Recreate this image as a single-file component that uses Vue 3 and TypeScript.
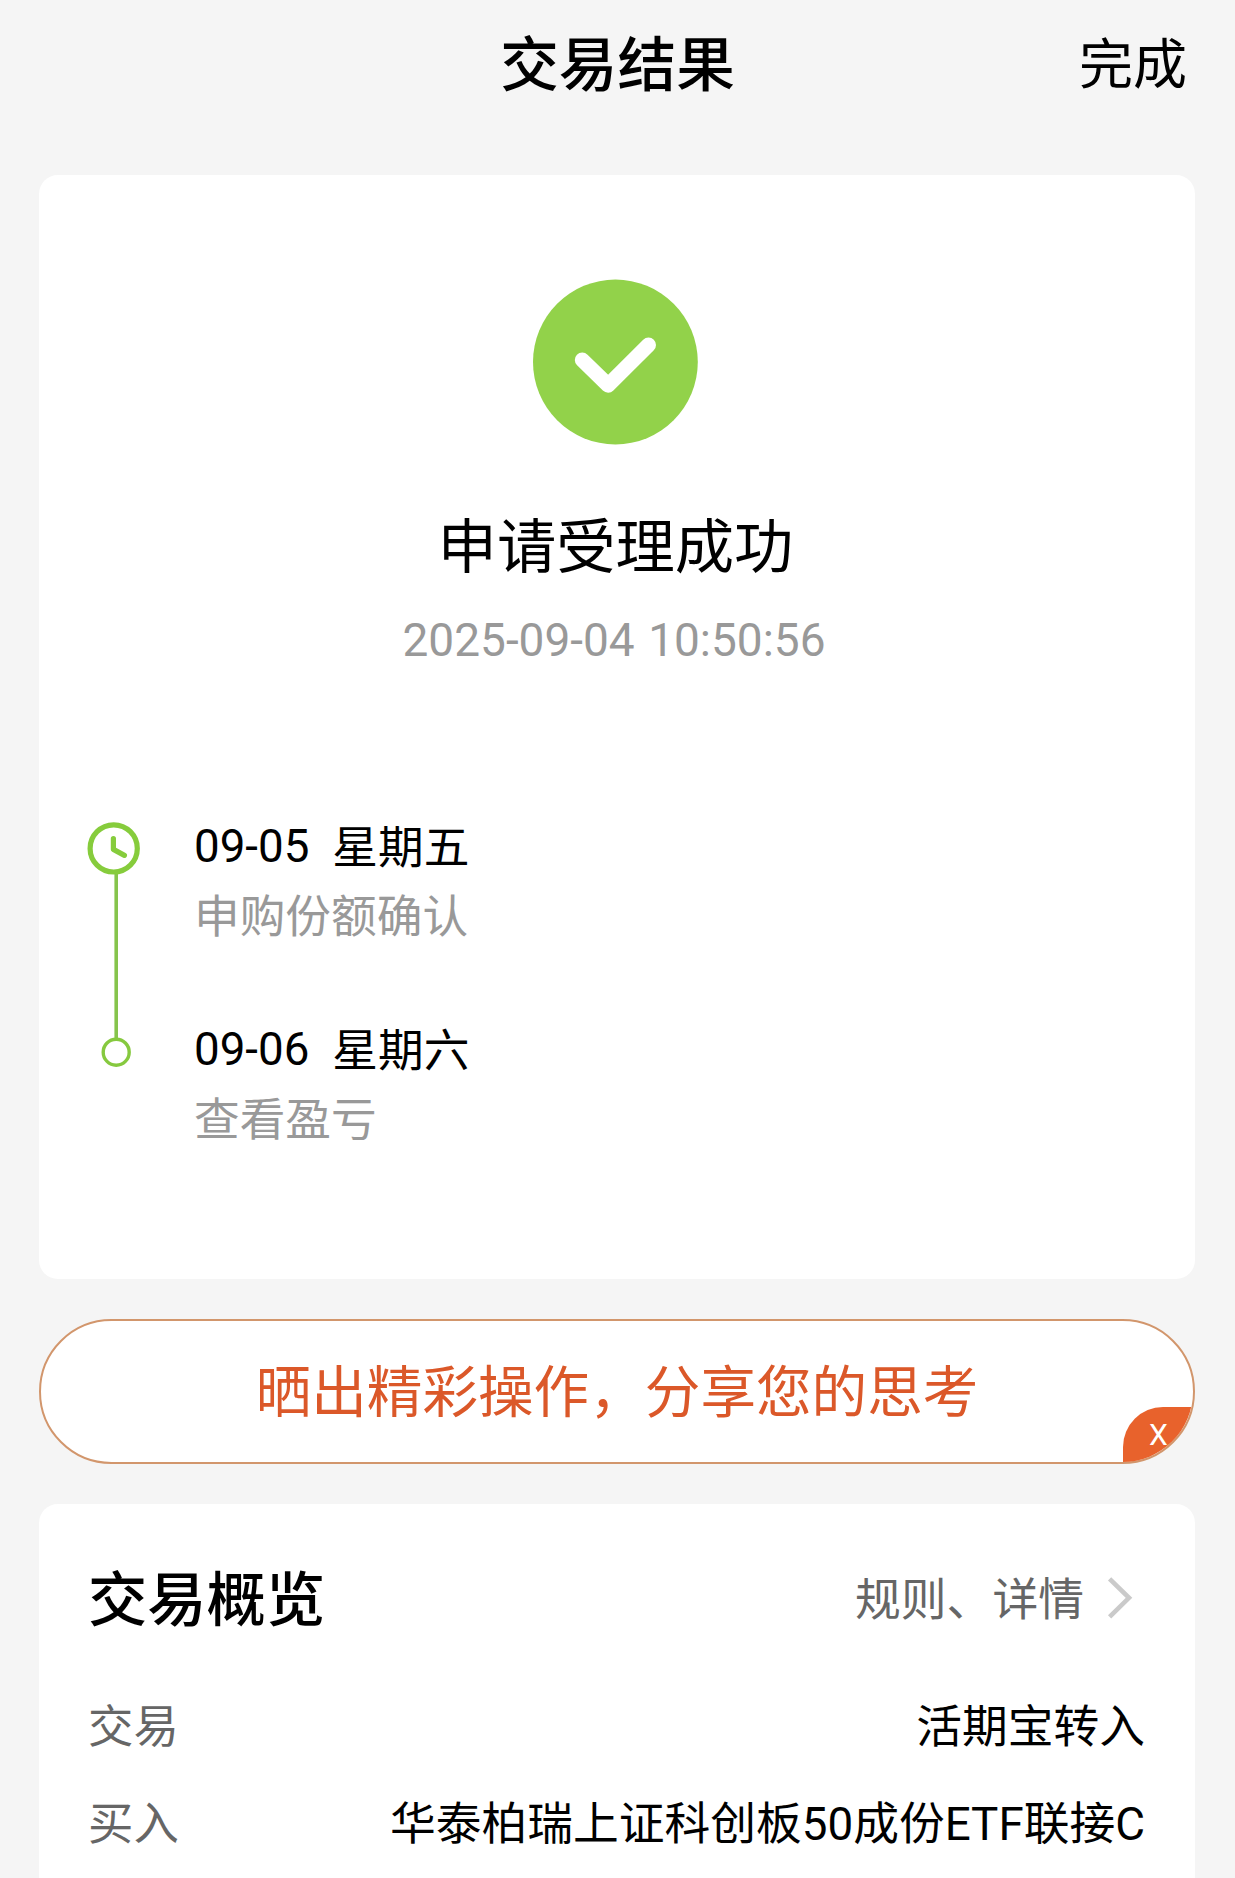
<script setup lang="ts">
interface Step {
  date: string
  weekday: string
  label: string
}

interface OverviewRow {
  label: string
  value: string
}

const steps: Step[] = [
  { date: '09-05', weekday: '星期五', label: '申购份额确认' },
  { date: '09-06', weekday: '星期六', label: '查看盈亏' },
]

const rows: OverviewRow[] = [
  { label: '交易', value: '活期宝转入' },
  { label: '买入', value: '华泰柏瑞上证科创板50成份ETF联接C' },
]
</script>

<template>
  <div class="page">
    <header class="header">
      <h1 class="title">交易结果</h1>
      <a class="done">完成</a>
    </header>

    <section class="card result">
      <svg class="success" viewBox="0 0 166 166" width="166" height="166">
        <circle cx="83.4" cy="83" r="82.4" fill="#92d24a" />
        <path d="M50.3 81 L76.1 106.2 L116.5 66" fill="none" stroke="#fff" stroke-width="15" stroke-linecap="round" stroke-linejoin="round" />
      </svg>
      <h2 class="status">申请受理成功</h2>
      <p class="time">2025-09-04 10:50:56</p>

      <div class="timeline">
        <svg class="track" viewBox="0 0 60 260" width="60" height="260">
          <path d="M31.2 57 V221" stroke="#86c44c" stroke-width="3.6" />
          <circle cx="28.7" cy="31.4" r="23.6" fill="none" stroke="#86cc3c" stroke-width="5.2" />
          <path d="M28.4 21.6 V32.4 L39.4 38.4" fill="none" stroke="#86cc3c" stroke-width="5.2" stroke-linecap="round" stroke-linejoin="round" />
          <circle cx="31.2" cy="235.2" r="13" fill="#fff" stroke="#86c93f" stroke-width="3.4" />
        </svg>
        <ul class="steps">
          <li v-for="step in steps" :key="step.date" class="step">
            <div class="when">
              <span>{{ step.date }}</span>
              <span class="weekday">{{ step.weekday }}</span>
            </div>
            <div class="what">{{ step.label }}</div>
          </li>
        </ul>
      </div>
    </section>

    <section class="share">
      <span class="share-text">晒出精彩操作，分享您的思考</span>
      <span class="close">X</span>
    </section>

    <section class="card overview">
      <div class="overview-head">
        <h2 class="overview-title">交易概览</h2>
        <a class="more">
          <span class="more-text">规则、详情</span>
          <svg class="chevron" viewBox="0 0 26 44" width="26" height="44">
            <path d="M2.6 1.8 L22 20.8 L2.6 39.8" fill="none" stroke="#cacaca" stroke-width="4.6" />
          </svg>
        </a>
      </div>
      <div v-for="row in rows" :key="row.label" class="row">
        <span class="row-label">{{ row.label }}</span>
        <span class="row-value">{{ row.value }}</span>
      </div>
    </section>
  </div>
</template>

<style>
body {
  margin: 0;
  background: #f5f5f5;
}
</style>

<style scoped>
.page {
  box-sizing: border-box;
  width: 1235px;
  height: 1878px;
  padding: 0 40px 0 39px;
  overflow: hidden;
  background: #f5f5f5;
  color: #000;
  font-family: Roboto, "Noto Sans CJK SC", sans-serif;
}

h1,
h2,
p,
ul {
  margin: 0;
  padding: 0;
  font-weight: 400;
  list-style: none;
}

.header {
  box-sizing: border-box;
  display: grid;
  grid-template-columns: 1fr auto 1fr;
  align-items: center;
  height: 131px;
  padding-top: 1px;
  margin-bottom: 44px;
}

.title {
  grid-column: 2;
  padding-left: 1px;
  font-size: 58.7px;
  font-weight: 500;
  line-height: 80px;
}

.done {
  justify-self: end;
  margin-right: 8px;
  font-size: 54px;
  line-height: 80px;
}

.card {
  box-sizing: border-box;
  background: #fff;
  border-radius: 19px;
}

.result {
  display: flex;
  flex-direction: column;
  align-items: center;
  height: 1104px;
  padding-top: 104px;
}

.success {
  display: block;
  margin-right: 4px;
}

.status {
  margin: 63px 3px 0 0;
  font-size: 59.3px;
  line-height: 80px;
}

.time {
  margin: 22px 6px 0 0;
  color: #999;
  font-size: 46px;
  line-height: 60px;
  word-spacing: 2px;
}

.timeline {
  display: flex;
  align-self: stretch;
  gap: 49px;
  margin-top: 147px;
  padding-left: 46px;
}

.track {
  flex: none;
}

.step {
  height: 203px;
}

.when,
.what {
  font-size: 45.7px;
  line-height: 60px;
}

.when {
  display: flex;
  gap: 23px;
  height: 60px;
}

.weekday {
  padding-top: 2px;
}

.what {
  margin-top: 11px;
  color: #999;
}

.share {
  position: relative;
  box-sizing: border-box;
  display: flex;
  align-items: center;
  justify-content: center;
  height: 145px;
  margin: 40px 0;
  border: 2px solid #d2966c;
  border-radius: 73px;
  background: #fff;
  overflow: hidden;
}

.share-text {
  padding-top: 3px;
  color: #db5829;
  font-size: 55.6px;
  line-height: 80px;
}

.close {
  position: absolute;
  right: 0;
  bottom: 0;
  box-sizing: border-box;
  width: 70px;
  height: 55px;
  padding-left: 26px;
  border-top-left-radius: 40px;
  background: #e8622c;
  color: #fff;
  font-size: 30px;
  line-height: 55px;
}

.overview {
  height: 420px;
  padding: 57px 50px 0 49px;
}

.overview-head {
  display: flex;
  align-items: center;
  justify-content: space-between;
  height: 80px;
  margin-bottom: 47px;
}

.overview-title {
  font-size: 59.3px;
  font-weight: 500;
  line-height: 80px;
}

.more {
  display: flex;
  align-items: center;
  gap: 23px;
  height: 60px;
  margin: 0 12px 5px 0;
  color: #666;
  font-size: 45.8px;
  line-height: 60px;
}

.more-text {
  padding-top: 4px;
}

.row {
  display: flex;
  justify-content: space-between;
  height: 97px;
  font-size: 45.75px;
  line-height: 80px;
}

.row-label {
  color: #666;
  font-size: 45.4px;
}
</style>
